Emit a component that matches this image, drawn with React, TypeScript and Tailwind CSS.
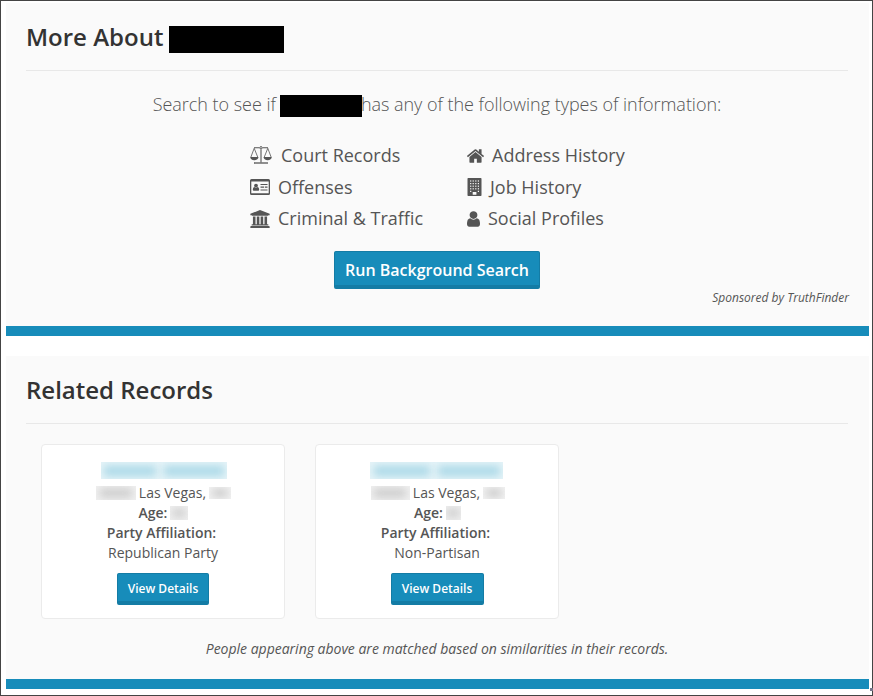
import type { ReactNode } from "react";

type IconProps = { className: string };

function ScaleIcon({ className }: IconProps) {
  return (
    <svg viewBox="0 0 22 18" className={className} fill="none" stroke="currentColor">
      <path d="M4 1.8H9.4M12.6 1.8H18M11 3.4V16.5" strokeWidth="1.1" />
      <circle cx="11" cy="1.8" r="1.2" strokeWidth="1" />
      <path d="M4.2 2.3L.9 11M4.2 2.3L7.7 11M17.8 2.3L14.3 11M17.8 2.3L21.1 11" strokeWidth=".8" />
      <path
        d="M.2 11H8.5C8.5 13 6.7 14.2 4.3 14.2S.2 13 .2 11zM13.5 11H21.8C21.8 13 20 14.2 17.7 14.2S13.5 13 13.5 11z"
        fill="currentColor"
        stroke="none"
      />
      <path d="M4 17H18" strokeWidth="1.3" />
    </svg>
  );
}

function CardIcon({ className }: IconProps) {
  return (
    <svg viewBox="0 0 20 16" className={className} fill="currentColor">
      <path
        fillRule="evenodd"
        d="M1.5 0h17A1.5 1.5 0 0 1 20 1.5v13a1.5 1.5 0 0 1-1.5 1.5h-17A1.5 1.5 0 0 1 0 14.5v-13A1.5 1.5 0 0 1 1.5 0zM1.3 2.6v11.7h17.4V2.6z"
      />
      <circle cx="6" cy="6.6" r="1.9" />
      <path d="M4.4 8q1.6 1.3 3.2 0 1.6.1 1.6 2.7 0 1.1-1 1.1H3.8q-1 0-1-1.1Q2.8 8.1 4.4 8z" />
      <path d="M10.5 5h7v1h-7zM10.5 7.6h3.7v1.2h-3.7zM15 7.6h2.5v1.2H15zM10.5 10.5h7v1h-7z" />
    </svg>
  );
}

function BankIcon({ className }: IconProps) {
  return (
    <svg viewBox="0 0 1920 1792" className={className} fill="currentColor">
      <path d="M960 0l960 384v128h-128q0 26-20.5 45t-48.5 19h-1526q-28 0-48.5-19t-20.5-45h-128v-128zm-704 640h256v768h128v-768h256v768h128v-768h256v768h128v-768h256v768h59q28 0 48.5 19t20.5 45v64h-1664v-64q0-26 20.5-45t48.5-19h59v-768zm1595 960q28 0 48.5 19t20.5 45v128h-1920v-128q0-26 20.5-45t48.5-19h1782z" />
    </svg>
  );
}

function HomeIcon({ className }: IconProps) {
  return (
    <svg viewBox="89 253 1614 1283" className={className} fill="currentColor">
      <path d="M1472 992v480q0 26-19 45t-45 19h-384v-384h-256v384h-384q-26 0-45-19t-19-45v-480q0-1 .5-3t.5-3l575-474 575 474q1 2 1 6zm223-69l-62 74q-8 9-21 11h-3q-13 0-21-7l-692-577-692 577q-12 8-24 7-13-2-21-11l-62-74q-8-10-7-23.5t11-21.5l719-599q32-26 76-26t76 26l244 204v-195q0-14 9-23t23-9h192q14 0 23 9t9 23v408l219 182q10 8 11 21.5t-7 23.5z" />
    </svg>
  );
}

const windows = [2.4, 5, 7.6, 10.2].flatMap((y) => [2.6, 5.1, 7.7, 10.3].map((x) => ({ x, y })));

function BuildingIcon({ className }: IconProps) {
  return (
    <svg viewBox="0 0 14 18" className={className} fill="currentColor">
      <rect width="14" height="18" rx=".7" />
      {windows.map(({ x, y }) => (
        <rect key={`${x}-${y}`} x={x} y={y} width="1.2" height="1.2" fill="#fafafa" />
      ))}
      <path d="M2.6 12.8h1.2V14H2.6zM10.3 12.8h1.2V14h-1.2zM5.2 14h3.7v2.8H5.2z" fill="#fafafa" />
    </svg>
  );
}

function UserIcon({ className }: IconProps) {
  return (
    <svg viewBox="256 128 1280 1536" className={className} fill="currentColor">
      <path d="M1536 1399q0 109-62.5 187t-150.5 78h-854q-88 0-150.5-78t-62.5-187q0-85 8.5-160.5t31.5-152 58.5-131 94-89 134.5-34.5q131 128 313 128t313-128q76 0 134.5 34.5t94 89 58.5 131 31.5 152 8.5 160.5zm-256-887q0 159-112.5 271.5t-271.5 112.5-271.5-112.5-112.5-271.5 112.5-271.5 271.5-112.5 271.5 112.5 112.5 271.5z" />
    </svg>
  );
}

function Section({ title, className, children }: { title: ReactNode; className: string; children: ReactNode }) {
  return (
    <section className={`flex flex-col border-b-[10px] border-[#178cba] bg-[#fafafa] pr-[21px] pl-5 ${className}`}>
      <h2 className="flex h-[68px] shrink-0 items-center border-b border-[#e8e8e8] pt-px text-2xl font-semibold text-[#333]">
        {title}
      </h2>
      {children}
    </section>
  );
}

function Item({ icon, gap, children }: { icon: ReactNode; gap: string; children: ReactNode }) {
  return (
    <li className={`flex h-[31.5px] items-center ${gap}`}>
      {icon}
      <span>{children}</span>
    </li>
  );
}

/* Obscured text: soft word shapes clipped to a tight box. */
function Smudge({ box, words, tint }: { box: string; words: string[]; tint: string }) {
  return (
    <span className={`flex shrink-0 items-center justify-center gap-2 overflow-hidden ${box}`}>
      {words.map((w) => (
        <span key={w} className={`shrink-0 blur-[4px] ${tint} ${w}`} />
      ))}
    </span>
  );
}

type Person = {
  party: string;
  nameBox: string;
  nameWords: string[];
  cityRow: string;
  cityBox: string;
  ageBox: string;
  button: string;
};

const people: Person[] = [
  {
    party: "Republican Party",
    nameBox: "ml-px h-[17px] w-[126px] bg-[#e6f4f8]",
    nameWords: ["h-2.5 w-[52px]", "h-2.5 w-[60px]"],
    cityRow: "pl-px",
    cityBox: "h-3.5 w-10 bg-[#f0f0f0]",
    ageBox: "h-3.5 w-[18px] bg-[#efefef]",
    button: "w-[92px]",
  },
  {
    party: "Non-Partisan",
    nameBox: "mr-px h-[17px] w-[133px] bg-[#e6f4f8]",
    nameWords: ["h-2.5 w-[56px]", "h-2.5 w-[62px]"],
    cityRow: "pl-0.5",
    cityBox: "h-3.5 w-[39px] bg-[#f0f0f0]",
    ageBox: "h-3.5 w-[15px] bg-[#efefef]",
    button: "w-[93px]",
  },
];

function PersonCard({ p }: { p: Person }) {
  return (
    <article className="flex h-[175px] w-[244px] flex-col items-center rounded border border-[#ebebeb] bg-white pt-[17px] text-sm leading-5 text-[#555]">
      <div className="flex h-[21px] items-start">
        <Smudge box={p.nameBox} words={p.nameWords} tint="bg-[#a9d8e7]" />
      </div>
      <div className={`flex h-5 items-center gap-[3px] ${p.cityRow}`}>
        <Smudge box={p.cityBox} words={["h-2 w-8"]} tint="bg-[#c8c8c8]" />
        <span>Las Vegas,</span>
        <Smudge box="h-3 w-[22px] bg-[#f3f3f3]" words={["h-2 w-4"]} tint="bg-[#cacaca]" />
      </div>
      <div className="flex h-5 items-center gap-[3px] pl-px font-semibold">
        <span>Age:</span>
        <Smudge box={p.ageBox} words={["h-2 w-3"]} tint="bg-[#cacaca]" />
      </div>
      <div className="pr-[3px] font-semibold">Party Affiliation:</div>
      <div>{p.party}</div>
      <button
        className={`mt-2.5 h-8 rounded-[2px] border border-b-4 border-[#147ca5] bg-[#178cba] pt-0.5 text-xs leading-[25px] font-semibold text-white ${p.button}`}
      >
        View Details
      </button>
    </article>
  );
}

export default function App() {
  return (
    <main className="relative h-[696px] w-[873px] border border-[#444] bg-white pt-[2px] pr-[3px] pl-[5px] font-['Open_Sans','Noto_Sans',sans-serif] text-[#555]">
      <Section
        className="h-[333px]"
        title={
          <>
            <span>More About</span>
            <span className="mt-1 ml-1.5 h-[27px] w-[115px] bg-black" />
          </>
        }
      >
        <p className="mt-5 flex h-[25px] items-center justify-center text-lg font-light tracking-[-0.03px]">
          <span>Search to see if</span>
          <span className="mt-1 ml-1 h-[22px] w-[82px] bg-black" />
          <span className="-ml-px">has any of the following types of information:</span>
        </p>
        <div className="mt-[23.5px] flex pl-[224px] text-lg">
          <ul className="w-[217px]">
            <Item gap="gap-[9px]" icon={<ScaleIcon className="h-[18px] w-[22px]" />}>Court Records</Item>
            <Item gap="gap-2" icon={<CardIcon className="mt-px h-4 w-5" />}>Offenses</Item>
            <Item gap="gap-2" icon={<BankIcon className="mt-px h-[18px] w-5" />}>Criminal &amp; Traffic</Item>
          </ul>
          <ul>
            <Item gap="gap-2" icon={<HomeIcon className="mt-px h-[14px] w-[17px]" />}>Address History</Item>
            <Item gap="gap-2" icon={<BuildingIcon className="h-[18px] w-[15px]" />}>Job History</Item>
            <Item gap="gap-2" icon={<UserIcon className="mt-px h-4 w-[13px]" />}>Social Profiles</Item>
          </ul>
        </div>
        <button className="mt-[17px] mr-px h-[38px] w-[206px] self-center rounded-[2px] border border-b-4 border-[#147ca5] bg-[#178cba] pt-[3px] pl-px text-base leading-[30px] font-semibold text-white">
          Run Background Search
        </button>
        <p className="-mr-px self-end text-xs leading-[17px] italic">Sponsored by TruthFinder</p>
      </Section>
      <Section className="mt-5 h-[333px]" title="Related Records">
        <div className="mt-5 flex gap-[30px] pl-[15px]">
          {people.map((p) => (
            <PersonCard key={p.party} p={p} />
          ))}
        </div>
        <p className="mt-5 text-center text-sm leading-5 tracking-[-0.01px] italic">
          People appearing above are matched based on similarities in their records.
        </p>
      </Section>
      <span className="absolute right-[-1px] bottom-1 h-[3px] w-[3px] bg-[#77758a]" />
    </main>
  );
}
